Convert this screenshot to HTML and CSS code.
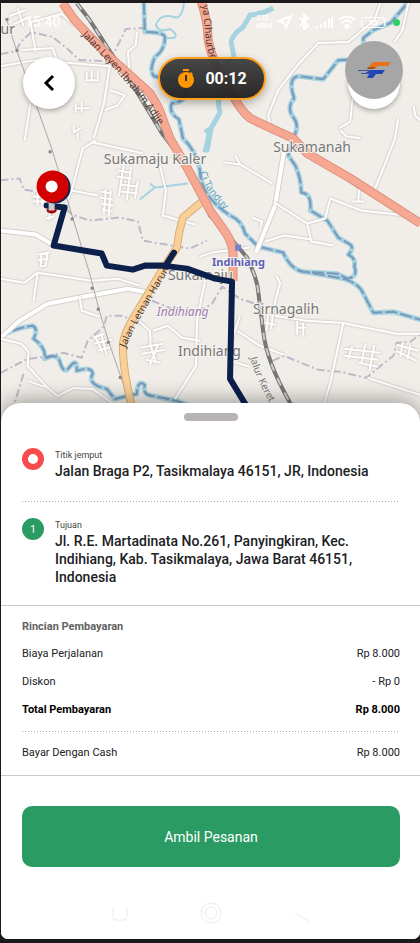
FILE: index.html
```html
<!DOCTYPE html>
<html lang="id">

<head>
  <meta charset="UTF-8" />
  <title>Ambil Pesanan</title>
  <meta name="viewport" content="width=device-width, initial-scale=1.0" />
  <link rel="stylesheet" href="styles.css">
</head>

<body>
  <main class="screen">
    <section class="map">
      <svg class="map-canvas" viewBox="1 3 419 423" preserveAspectRatio="xMidYMin slice" aria-label="Peta">
        <defs>
          <path id="trunk" d="M63 3L75 20L87 33L110 57L130 75L150 93Q160 108 163 119L170 138L187 167L210 210L225 231Q233 243 233 254V280" />
          <path id="east" d="M199 -5Q208 20 208 38Q211 60 230 90Q240 110 250 118L271 128L293 138L307 153L350 178L420 223" />
          <path id="letnan" d="M206 198L183 217L179 233L177 247L162 270L133 318Q123 335 123 345Q123 370 133 410" />
          <path id="rail" d="M77 3L90 20L110 51L130 80L162 133L185 163L210 215L230 237L247 257Q257 278 258 290L263 330Q266 360 290 402L300 415" />
          <path id="river" d="M144 3L145 32Q166 32 165 38Q165 50 155 57Q149 70 154 76Q184 80 187 92Q185 102 172 103Q168 112 179 119L183 138Q196 150 200 170Q200 195 230 215Q242 220 245 233L258 246L283 252Q290 268 302 271L337 273L347 278Q358 276 354 266Q356 258 348 254Q354 248 350 244L338 237L327 220L310 210Q312 193 301 192Q301 178 295 165L288 155L293 138Q300 125 293 117Q286 107 294 98Q287 78 298 76L323 79L338 60L363 59V38L373 30L390 23L407 3" />
          <path id="river2" d="M0 337Q12 328 33 325Q39 328 34 338Q47 347 45 358Q57 352 60 360Q64 375 70 366Q78 356 77 370Q92 365 93 373Q88 381 100 386L107 388L115 398L137 393Q138 378 145 384Q142 394 153 395L177 400L190 405" />
          <path id="river3" d="M298 270L343 278Q359 283 363 293L373 312L393 311L420 319" />
          <path id="jl1" d="M82 35L112 66L140 98L162 129" />
          <path id="jl2" d="M202 5Q205 26 206 42Q211 66 226 90L236 106" />
          <path id="jl3" d="M126 347Q130 337 140 318L171 266" />
          <path id="ci" d="M200 172Q204 192 232 216" />
          <path id="jalur" d="M250 357Q256 380 274 409" />
        </defs>

        <rect class="land" x="0" y="0" width="430" height="440" />

        <g class="water">
          <use href="#river" />
          <use href="#river2" />
          <use href="#river3" />
          <path d="M273 8Q262 14 250 15L243 27Q228 38 232 46L234 58L223 67V85Q216 100 220 112L210 130L205 152" />
          <path class="thin" d="M184 3Q182 20 174 17Q160 13 156 25Q159 33 170 29Q179 34 174 38H165" />
          <path class="thin" d="M140 199L155 187L150 183M155 187L188 183" />
          <path d="M205 132L211 128L207 151" />
        </g>
        <g class="border river-border">
          <use href="#river" />
          <use href="#river2" />
          <use href="#river3" />
        </g>
        <g class="border">
          <path d="M1 54L16 51L22 41L32 32L53 37L67 48L80 60L110 61L126 29L144 28" />
          <path d="M1 180L20 178L24 189L53 194L72 214L90 220L120 217L138 221L143 240L160 243L190 248L207 240" />
          <path d="M1 372L28 358L46 356L64 352L82 357L88 340L104 326L107 315L122 315L143 324M24 373L15 402" />
          <path d="M152 300L172 308L196 312L212 303L222 286L240 298L258 304M272 360L284 355L318 369L340 371L366 377L379 366L393 355L396 342L410 341L420 333" />
        </g>

        <g class="casing">
          <path d="M284 150L275 205L256 252" />
          <path d="M1 230L36 234L56 246M1 337L20 320L48 303L84 296L128 288L155 293" />
        </g>
        <g class="road">
          <path d="M284 150L275 205L256 252" />
          <path d="M1 230L36 234L56 246M1 337L20 320L48 303L84 296L128 288L155 293" />
        </g>
        <g class="street">
          <path d="M274 202L307 223L325 218L330 198L361 210L406 215M307 223L311 241L333 245M265 241L284 235L312 239" />
          <path d="M271 133L268 115L278 90L299 63L318 43L348 42L374 20L380 3" />
          <path d="M394 140L384 165L374 190M352 201H364M358 200L359 182M224 162L240 164L272 183M240 164L235 155" />
          <path d="M339 128L350 121L352 100L360 82M340 130L346 136L360 138M413 106L415 116L420 120M408 3L402 30L394 42M394 140L398 118" />
          <path d="M268 314L306 320L341 322L396 333H420M343 322L330 382L324 402M367 377L420 394" />
          <path d="M1 66L36 60L110 66L104 104L94 138M36 52L31 22L62 14L76 26M31 103L25 140M58 62L53 48L22 50" />
          <path d="M130 75L128 52L136 45L137 32M110 90L125 95L118 105L105 110" />
          <path d="M96 140L83 148L72 190L65 207M72 190L98 195M92 142L143 153M160 165L166 190L163 215L195 224" />
          <path d="M140 285L118 278L92 280L38 272L25 282L1 278M38 272L34 300M80 296L82 310L100 316" />
          <path d="M1 338L22 343L29 351L28 365L47 386L58 395L74 387L93 388L112 402M28 380L45 386" />
          <path d="M135 317L150 330L151 344M153 330L168 325L182 337L200 340M207 270L197 320L196 365L175 398M237 330L260 345L284 354M230 360L250 366" />
          <path d="M276 275L280 282L270 320M240 315L228 350M200 256L212 252L250 247" />
        </g>
        <!-- perumahan -->
        <g class="blocks">
          <path d="M101 191L112 193M100 197L113 199M101 203L114 205M102 209L112 211M106 189L104 214M111 190L109 216" />
          <path d="M118 170L130 172M117 176L132 178M120 184L138 186M121 191L138 193M124 164L119 196M131 167L127 200M138 180L135 198" />
          <path d="M33 196H46M33 201H48M34 190H44M38 190V205M43 191V205M46 218L54 216M50 212V220" />
          <path d="M38 254L50 252M38 260L49 258M40 266L47 265M42 252L41 266M48 251L46 266" />
          <path d="M87 72V80H98V70M92 70V80M75 108H90M76 104V112M82 101V112M74 125V132L82 127M78 132V139" />
          <path d="M94 337L104 333M94 343L112 339M98 350L112 346M102 335L107 355M96 337L103 352" />
          <path d="M140 347L163 343M142 353L165 349M146 359L160 362M150 342L156 362M158 344L150 364" />
          <path d="M344 348L380 352M344 355L378 359M358 362L378 366M365 343L361 362M374 344L369 370M352 345L348 358" />
          <path d="M396 344L418 350M396 350L416 360M402 342L400 356M410 344L407 358" />
          <path d="M297 320V334M303 322V336M296 327H306M268 315L266 330M273 312L271 328M264 322L276 324" />
          <path d="M10 16L26 10M14 24L28 18M18 8L24 26M252 217L262 221L260 226" />
        </g>
        <g class="powerline">
          <path d="M7 19L17 50L36 103L52 148L73 217L90 273L99 308L109 341L121 376L130 402" />
          <path class="pylons" d="M6 18h3v3h-3zM16 49h3v3h-3zM49 150h3v3h-3zM71 217h3v3h-3zM91 286h3v3h-3zM97 307h3v3h-3zM107 340h3v3h-3zM119 375h3v3h-3z" />
        </g>

        <use class="rail-base" href="#rail" />
        <use class="rail-dash" href="#rail" />
        <use class="letnan-casing" href="#letnan" />
        <use class="letnan" href="#letnan" />
        <use class="trunk-casing" href="#trunk" />
        <use class="trunk-casing" href="#east" />
        <use class="trunk" href="#trunk" />
        <use class="trunk" href="#east" />
        <rect class="station" x="235" y="244" width="6" height="6" />

        <g class="street-name">
          <text><textPath href="#jl1">Jalan Leyen.Ibrahim Adjie</textPath></text>
          <text><textPath href="#jl2">ya Cihaurbeuti</textPath></text>
          <text><textPath href="#jl3">Jalan Letnan Harun</textPath></text>
          <text class="river-name"><textPath href="#ci">Ci Tanduy</textPath></text>
          <text class="rail-name"><textPath href="#jalur">Jalur Keret</textPath></text>
        </g>
        <g class="place">
          <text x="1" y="34">ur</text>
          <text x="104" y="164">Sukamaju Kaler</text>
          <text x="273" y="152">Sukamanah</text>
          <text x="168" y="279">Sukamaju</text>
          <text x="253" y="313">Sirnagalih</text>
          <text x="178" y="355">Indihiang</text>
          <text class="district" x="157" y="315">Indihiang</text>
          <text class="stop" x="212" y="265">Indihiang</text>
        </g>

        <path class="route" d="M47 205L65 207L54 245L102 253L107 265L133 269L145 265H163L187 268L215 278L232 281L230 378L247 406M165 266L174 252" />

        <g class="pin">
          <ellipse cx="52" cy="210" rx="5" ry="3" fill="#a00810" />
          <rect x="49" y="198" width="6" height="12" fill="#c9c9c9" />
          <circle cx="55" cy="187" r="16" fill="#16204a" />
          <circle cx="53" cy="186" r="16" fill="#d20000" />
          <circle cx="52" cy="186" r="6" fill="#fff" />
        </g>
      </svg>

      <div class="status-bar">
        <span class="clock">15:40</span>
        <div class="status-icons">
          <span class="speed">272<br>KB/d</span>
          <svg width="16" height="16" viewBox="0 0 16 16"><path d="M2 7L14 2L9 14L7 9Z" /></svg>
          <svg width="12" height="16" viewBox="0 0 12 16"><path d="M2 4L10 12L6 15V1L10 4L2 12" /></svg>
          <svg width="18" height="14" viewBox="0 0 18 14"><path d="M2 13V11M6 13V9M10 13V7M14 13V4M17 13V2" /></svg>
          <svg width="18" height="14" viewBox="0 0 18 14"><path d="M1 5Q9 -2 17 5M4 8Q9 3 14 8M7 11Q9 9 11 11L9 13Z" /></svg>
          <span class="battery">53</span>
          <span class="camera-dot"></span>
        </div>
      </div>

      <header class="map-header">
        <button class="round" type="button" aria-label="Kembali">
          <svg width="14" height="20" viewBox="0 0 14 20"><path d="M11 3L4 10L11 17" /></svg>
        </button>
        <div class="timer">
          <svg width="20" height="20" viewBox="0 0 20 20">
            <path fill="#ff9800" d="M7 0h6v2H7zM15 3l2 2-1 1-2-2z" />
            <circle cx="10" cy="11" r="8" fill="#ff9800" />
            <path fill="#333" d="M9 6h2v6H9z" />
          </svg>
          <span>00:12</span>
        </div>
        <button class="round" type="button" aria-label="Profil">
          <span class="avatar">
            <svg width="36" height="18" viewBox="0 0 36 18">
              <path fill="#e8731c" d="M18 1H35L32 5H22L18 8H12L15 3Q16 1 18 1Z" />
              <path fill="#a65420" d="M12 6H20L18 8H11Z" />
              <path fill="#2445b5" d="M14 9H29L26 13H20L17 17H11L13 13H8Z" />
              <path fill="#4055a0" d="M2 9H15L13 10H2ZM5 12H15L14 13H5Z" />
            </svg>
          </span>
        </button>
      </header>
    </section>

    <section class="sheet">
      <div class="handle"></div>

      <div class="stop-point">
        <span class="marker pickup"></span>
        <div>
          <div class="label">Titik jemput</div>
          <div class="address">Jalan Braga P2, Tasikmalaya 46151, JR, Indonesia</div>
        </div>
      </div>
      <div class="dots"></div>
      <div class="stop-point destination">
        <span class="marker">1</span>
        <div>
          <div class="label">Tujuan</div>
          <div class="address">Jl. R.E. Martadinata No.261, Panyingkiran, Kec. Indihiang, Kab. Tasikmalaya, Jawa Barat 46151, Indonesia</div>
        </div>
      </div>

      <div class="payment">
        <h2>Rincian Pembayaran</h2>
        <dl>
          <div><dt>Biaya Perjalanan</dt><dd>Rp 8.000</dd></div>
          <div><dt>Diskon</dt><dd>- Rp 0</dd></div>
          <div class="total"><dt>Total Pembayaran</dt><dd>Rp 8.000</dd></div>
        </dl>
        <div class="dots"></div>
        <dl>
          <div><dt>Bayar Dengan Cash</dt><dd>Rp 8.000</dd></div>
        </dl>
      </div>

      <button class="take" type="button">Ambil Pesanan</button>

      <div class="system-nav">
        <svg width="20" height="20" viewBox="0 0 20 20"><path d="M3 4V14Q3 17 6 17H14Q17 17 17 14V4" /></svg>
        <svg width="22" height="22" viewBox="0 0 22 22"><circle cx="11" cy="11" r="10" /><circle cx="11" cy="11" r="6" /></svg>
        <svg width="20" height="20" viewBox="0 0 20 20"><path d="M3 10L17 18" /></svg>
      </div>
    </section>
  </main>
</body>

</html>
```
FILE: styles.css
```css
:root {
  --color-green: #2a9c63;
  --color-red: #f94b4b;
  --color-orange: #ff9f1a;
  --color-line: #cacaca;
  --color-frame: #1c1a1b;
}

* {
  box-sizing: border-box;
}

body {
  margin: 0;
  padding: 3px 0 4px 1px;
  background-color: var(--color-frame);
  font-family: Roboto, "Liberation Sans", sans-serif;
  color: #202124;
}

button {
  border: 0;
  padding: 0;
  font-family: inherit;
  cursor: pointer;
}

.screen {
  display: flex;
  flex-direction: column;
  min-height: calc(100vh - 7px);
  border-radius: 0 0 7px 7px;
  overflow: hidden;
  background-color: #fff;
}

/* map */
.map {
  position: relative;
  flex: 1 0 423px;
  overflow: hidden;
}

.map-canvas {
  position: absolute;
  inset: 0;
  width: 100%;
  height: 100%;
}

.map-canvas path,
.map-canvas use {
  fill: none;
  stroke-linejoin: round;
}

.land { fill: #f1eee9; }

.water { stroke: #a5d3e0; stroke-width: 5; }
.water .thin { stroke-width: 2; }

.border { stroke: #8d73a3; stroke-width: 2; stroke-dasharray: 8 3 2 3; opacity: 0.45; }
.river-border { stroke: #5f6fa0; stroke-dasharray: 12 3; opacity: 0.6; }

.casing { stroke: #d3d0cd; stroke-width: 6; }
.road { stroke: #fff; stroke-width: 4; }

.street,
.blocks {
  stroke: #fff;
  stroke-width: 2;
  filter: drop-shadow(0 0 1px #b5b0ab);
}

.powerline { stroke: #aaa; stroke-width: 1; }
.map-canvas .pylons { fill: #888; stroke: none; }

.rail-base { stroke: #777; stroke-width: 4; }
.rail-dash { stroke: #ccc; stroke-width: 2; stroke-dasharray: 8 8; }

.trunk-casing { stroke: #e0907c; stroke-width: 9; }
.trunk { stroke: #f6a892; stroke-width: 7; }

.letnan-casing { stroke: #d9ae70; stroke-width: 8; }
.letnan { stroke: #fad09a; stroke-width: 6; }

.station { fill: #7880c8; }

.street-name,
.place {
  font-family: "Noto Sans", sans-serif;
  paint-order: stroke;
}

.street-name { font-size: 10px; fill: #4d3a35; }
.river-name { fill: #5b9fc0; }
.rail-name { fill: #777; }

.place { font-size: 14px; fill: #777; stroke: #f5f3ef; stroke-width: 2; }
.place .district { font-size: 12px; font-style: italic; fill: #a07bb0; }
.place .stop { font-size: 11px; font-weight: 700; fill: #6060b8; }

.map-canvas .route {
  stroke: #0c204c;
  stroke-width: 6;
  stroke-linecap: round;
}

/* status bar */
.status-bar {
  position: relative;
  display: flex;
  justify-content: space-between;
  align-items: center;
  height: 38px;
  padding: 0 20px 0 24px;
  color: #fff;
}

.clock {
  font-size: 14px;
  font-weight: 500;
}

.status-icons {
  display: flex;
  align-items: center;
  gap: 5px;
}

.status-icons svg {
  fill: none;
  stroke: #fff;
  stroke-width: 2;
}

.speed {
  font-size: 7px;
  line-height: 8px;
  font-weight: 700;
}

.battery {
  width: 24px;
  margin-right: 3px;
  border: 1px solid #fff;
  border-radius: 3px;
  font-size: 8px;
  line-height: 9px;
  font-weight: 700;
  text-align: center;
}

.camera-dot {
  width: 7px;
  height: 7px;
  border-radius: 50%;
  background-color: #32cf62;
}

/* buttons over the map */
.map-header {
  position: relative;
  display: flex;
  justify-content: space-between;
  padding: 16px 20px 0 22px;
}

.round {
  position: relative;
  display: flex;
  align-items: center;
  justify-content: center;
  width: 52px;
  height: 52px;
  border-radius: 50%;
  background-color: #fff;
  box-shadow: 0 2px 5px rgba(0, 0, 0, 0.3);
}

.round > svg {
  fill: none;
  stroke: #000;
  stroke-width: 3;
}

.timer {
  display: flex;
  align-items: center;
  justify-content: center;
  gap: 9px;
  width: 108px;
  height: 43px;
  border: 2px solid var(--color-orange);
  border-radius: 22px;
  background: linear-gradient(rgba(62, 62, 62, 0.95), rgba(30, 30, 30, 0.95));
  box-shadow: 0 3px 8px rgba(0, 0, 0, 0.3);
  color: #fff;
  font-size: 16px;
  font-weight: 700;
}

.avatar {
  position: absolute;
  top: -16px;
  left: -3px;
  display: flex;
  align-items: center;
  justify-content: center;
  width: 58px;
  height: 58px;
  border-radius: 50%;
  background-color: #a6a6a6;
}

/* bottom sheet */
.sheet {
  position: relative;
  margin-top: -24px;
  padding-top: 10px;
  border-radius: 20px 20px 0 0;
  background-color: #fff;
  box-shadow: 0 -3px 20px rgba(0, 0, 0, 0.35);
}

.handle {
  width: 54px;
  height: 8px;
  margin: 0 auto 27px;
  border-radius: 4px;
  background-color: #b8b4b4;
}

.stop-point {
  display: flex;
  gap: 11px;
  padding: 0 40px 0 21px;
}

.destination {
  padding-bottom: 19px;
  border-bottom: 1px solid var(--color-line);
}

.marker {
  flex: none;
  width: 22px;
  height: 22px;
  border-radius: 50%;
  background-color: var(--color-green);
  color: #fff;
  font-size: 10px;
  line-height: 24px;
  text-align: center;
}

.marker.pickup {
  border: 6px solid var(--color-red);
  background-color: #fff;
}

.label {
  font-size: 9px;
  line-height: 14px;
  color: #444;
}

.address {
  font-size: 14px;
  line-height: 18px;
  font-weight: 500;
}

.dots {
  height: 1px;
  margin: 21px 20px 16px 21px;
  background: repeating-linear-gradient(90deg, #aaa 0 1px, transparent 1px 3px);
}

.payment {
  padding: 12px 20px 13px 21px;
  border-bottom: 1px solid var(--color-line);
  font-size: 11px;
  line-height: 18px;
}

.payment h2 {
  margin: 0 0 9px;
  font-size: 11px;
  font-weight: 700;
  color: #616161;
}

.payment dl {
  display: grid;
  gap: 10px;
  margin: 0;
}

.payment dl > div {
  display: flex;
  justify-content: space-between;
}

.payment dd {
  margin: 0;
}

.payment .dots {
  margin: 12px 0;
}

.total {
  font-weight: 700;
  color: #000;
}

.take {
  display: block;
  width: calc(100% - 41px);
  height: 61px;
  margin: 30px 20px 0 21px;
  border-radius: 10px;
  background-color: var(--color-green);
  color: #fff;
  font-size: 14px;
}

.system-nav {
  display: flex;
  justify-content: center;
  align-items: center;
  gap: 70px;
  padding: 35px 0 15px;
}

.system-nav svg {
  fill: none;
  stroke: #ececec;
}
```
